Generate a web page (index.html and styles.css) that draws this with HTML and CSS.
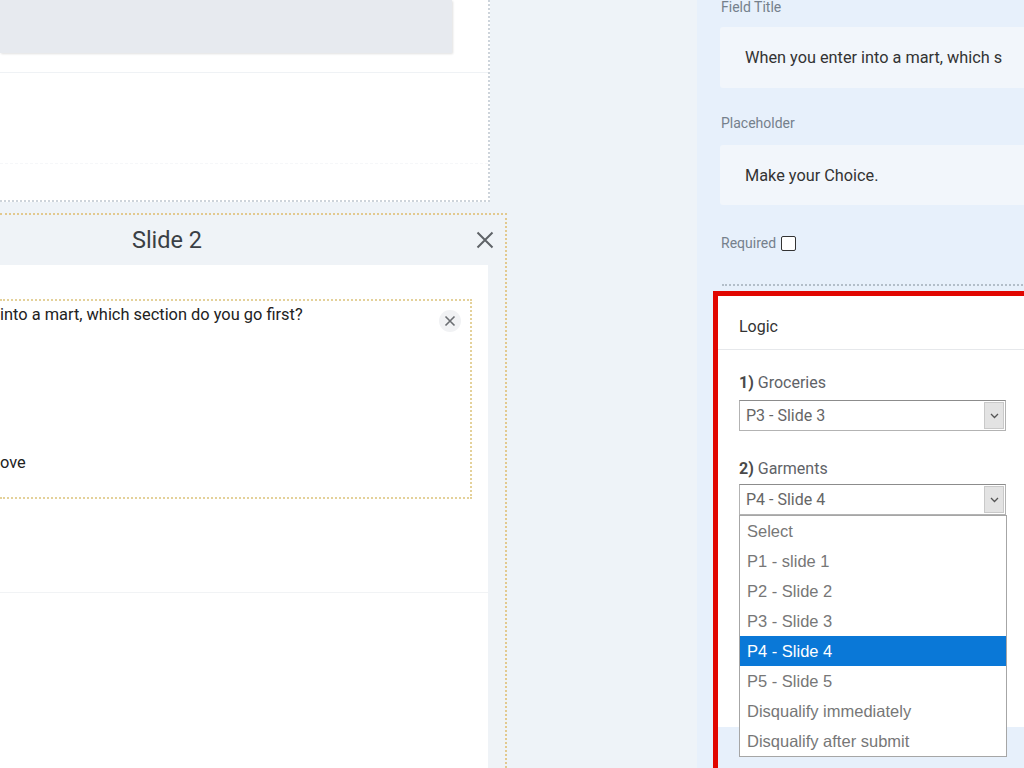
FILE: index.html
```html
<!DOCTYPE html>
<html>
<head>
<meta charset="utf-8">
<link rel="stylesheet" href="styles.css">
</head>
<body>
<div class="app">
  <div class="canvas">
    <section class="prev">
      <div class="prev-top"></div>
      <div class="prev-line"></div>
      <div class="prev-dash"></div>
    </section>
    <section class="slide">
      <header class="slide-head">
        <div class="slide-title">Slide 2</div>
        <button class="slide-close" aria-label="Close">
          <svg width="18" height="18" viewBox="0 0 18 18"><path d="M1.5 1.5L16.5 16.5M16.5 1.5L1.5 16.5" stroke="#5f6368" stroke-width="2" fill="none"/></svg>
        </button>
      </header>
      <div class="slide-body">
        <div class="question">
          <div class="question-row">
            <div class="question-text">into a mart, which section do you go first?</div>
            <button class="q-close" aria-label="Remove">
              <svg width="12" height="12" viewBox="0 0 12 12"><path d="M1.5 1.5L10.5 10.5M10.5 1.5L1.5 10.5" stroke="#6b6e72" stroke-width="1.6" fill="none"/></svg>
            </button>
          </div>
          <div class="option-text">ove</div>
        </div>
        <div class="body-line"></div>
      </div>
    </section>
  </div>
  <div class="spacer"></div>
  <aside class="panel">
    <div class="label label-first">Field Title</div>
    <div class="input input-first">When you enter into a mart, which s</div>
    <div class="label label-ph">Placeholder</div>
    <div class="input input-ph">Make your Choice.</div>
    <div class="required"><span class="label">Required</span><span class="checkbox"></span></div>
    <div class="dots"></div>
    <div class="redbox">
      <div class="logic">
        <div class="logic-head">Logic</div>
        <div class="logic-body">
          <div class="rule-label"><b>1)</b> Groceries</div>
          <div class="select">
            <span class="select-value">P3 - Slide 3</span>
            <span class="select-btn"><svg width="9" height="6" viewBox="0 0 9 6"><path d="M1 1l3.5 3.5L8 1" stroke="#555" stroke-width="1.3" fill="none"/></svg></span>
          </div>
          <div class="rule-label rule-2"><b>2)</b> Garments</div>
          <div class="select-wrap">
            <div class="select select-2">
              <span class="select-value">P4 - Slide 4</span>
              <span class="select-btn"><svg width="9" height="6" viewBox="0 0 9 6"><path d="M1 1l3.5 3.5L8 1" stroke="#555" stroke-width="1.3" fill="none"/></svg></span>
            </div>
            <ul class="listbox">
              <li>Select</li>
              <li>P1 - slide 1</li>
              <li>P2 - Slide 2</li>
              <li>P3 - Slide 3</li>
              <li class="selected">P4 - Slide 4</li>
              <li>P5 - Slide 5</li>
              <li>Disqualify immediately</li>
              <li>Disqualify after submit</li>
            </ul>
          </div>
        </div>
      </div>
    </div>
  </aside>
</div>
</body>
</html>
```

FILE: styles.css
```css
* { box-sizing: border-box; }
html, body { margin: 0; padding: 0; }
body {
  font-family: Roboto, "Liberation Sans", sans-serif;
  background: #eef3f8;
  overflow: hidden;
}
.app {
  display: flex;
  width: 1024px;
  height: 768px;
  overflow: hidden;
  background: #eef3f8;
}
.canvas {
  width: 507px;
  flex: none;
  display: flex;
  flex-direction: column;
}
.prev {
  width: 490px;
  height: 202px;
  flex: none;
  background: #fff;
  border-right: 2px dotted #cdd4db;
  border-bottom: 2px dotted #cdd4db;
  display: flex;
  flex-direction: column;
}
.prev-top {
  width: 452px;
  height: 53px;
  background: #e7eaef;
  box-shadow: 1px 1px 2px rgba(0, 0, 0, 0.12);
}
.prev-line {
  margin-top: 19px;
  border-top: 1px solid #eff2f5;
}
.prev-dash {
  margin-top: 90px;
  border-top: 1px dashed #f6f7f9;
}
.slide {
  margin-top: 11px;
  flex: 1;
  border-top: 2px dotted #e2c98f;
  border-right: 2px dotted #e2c98f;
  background: #eff3f7;
  display: flex;
  flex-direction: column;
}
.slide-head {
  height: 50px;
  flex: none;
  display: flex;
  align-items: center;
}
.slide-title {
  width: 334px;
  text-align: center;
  font-size: 23.5px;
  color: #3a3f45;
}
.slide-close {
  margin-left: auto;
  margin-right: 11px;
  width: 18px;
  height: 18px;
  padding: 0;
  border: 0;
  background: none;
  display: flex;
}
.slide-body {
  width: 488px;
  flex: 1;
  background: #fff;
  padding-top: 34px;
}
.question {
  width: 472px;
  height: 200px;
  border-top: 2px dotted #e4d19a;
  border-right: 2px dotted #e4d19a;
  border-bottom: 2px dotted #e4d19a;
  display: flex;
  flex-direction: column;
  justify-content: space-between;
  padding-bottom: 25px;
}
.question-row {
  display: flex;
  align-items: flex-start;
  padding-top: 5px;
}
.question-text {
  font-size: 16.4px;
  line-height: 18px;
  color: #222;
}
.q-close {
  margin-left: auto;
  margin-right: 9px;
  margin-top: 4px;
  width: 22px;
  height: 22px;
  border-radius: 50%;
  border: 0;
  padding: 0;
  background: #f1f2f4;
  display: flex;
  align-items: center;
  justify-content: center;
}
.option-text {
  font-size: 16.4px;
  line-height: 18px;
  color: #222;
}
.body-line {
  margin-top: 93px;
  border-top: 1px solid #f1f3f5;
}
.spacer { flex: 1; }
.panel {
  width: 327px;
  flex: none;
  background: #e7f0fb;
  padding-left: 23px;
  overflow: hidden;
  display: flex;
  flex-direction: column;
}
.label {
  font-size: 14px;
  line-height: 16px;
  color: #75808c;
  padding-left: 1px;
}
.label-first { margin-top: -1px; }
.input {
  width: 320px;
  flex: none;
  background: #f2f6fb;
  font-size: 16.3px;
  color: #333;
  display: flex;
  align-items: center;
  padding-left: 25px;
  border-radius: 3px;
  white-space: nowrap;
  overflow: hidden;
}
.input-first { margin-top: 12px; height: 61px; }
.label-ph { margin-top: 27px; }
.input-ph { margin-top: 14px; height: 60px; }
.required {
  margin-top: 30px;
  display: flex;
  align-items: center;
  gap: 5px;
  height: 16px;
}
.checkbox {
  width: 15px;
  height: 15px;
  border: 1.5px solid #333;
  border-radius: 2px;
  background: #fff;
}
.dots {
  margin-top: 33px;
  margin-left: 2px;
  width: 320px;
  border-top: 2px dotted #b3bec9;
}
.redbox {
  margin-top: 5px;
  margin-left: -7px;
  width: 330px;
  flex: 1;
  border: 5px solid #e10600;
  border-right: 0;
  border-bottom: 0;
  background: #e7f0fb;
}
.logic {
  background: #fff;
  height: 431px;
}
.logic-head {
  height: 54px;
  padding-left: 21px;
  padding-top: 7px;
  display: flex;
  align-items: center;
  font-size: 16px;
  color: #333;
  border-bottom: 1px solid #e6e8eb;
}
.logic-body {
  padding-left: 21px;
  padding-top: 24px;
}
.rule-label {
  font-size: 16px;
  line-height: 18px;
  color: #5f6368;
}
.rule-label b { font-weight: 700; color: #4a4a4a; }
.rule-2 { margin-top: 29px; }
.select {
  margin-top: 8px;
  width: 267px;
  height: 31px;
  border: 1px solid #b3b3b3;
  border-top-color: #8c8c8c;
  display: flex;
  align-items: stretch;
  background: #fff;
}
.select-value {
  flex: 1;
  padding-left: 6px;
  display: flex;
  align-items: center;
  font-size: 16px;
  color: #666;
}
.select-btn {
  width: 20px;
  margin: 1px;
  background: #e3e3e3;
  border: 1px solid #c9c9c9;
  display: flex;
  align-items: center;
  justify-content: center;
}
.select-wrap {
  position: relative;
  padding-top: 6px;
}
.select-2 { margin-top: 0; }
.listbox {
  position: absolute;
  left: 0;
  top: 100%;
  width: 268px;
  margin: 0;
  padding: 0;
  list-style: none;
  background: #fff;
  border: 1px solid #a6a6a6;
  z-index: 2;
}
.listbox li {
  height: 30px;
  line-height: 30px;
  padding-left: 7px;
  font-family: "Liberation Sans", Arial, sans-serif;
  font-size: 16.5px;
  color: #777;
}
.listbox li.selected {
  background: #0a78d7;
  color: #fff;
}
```
